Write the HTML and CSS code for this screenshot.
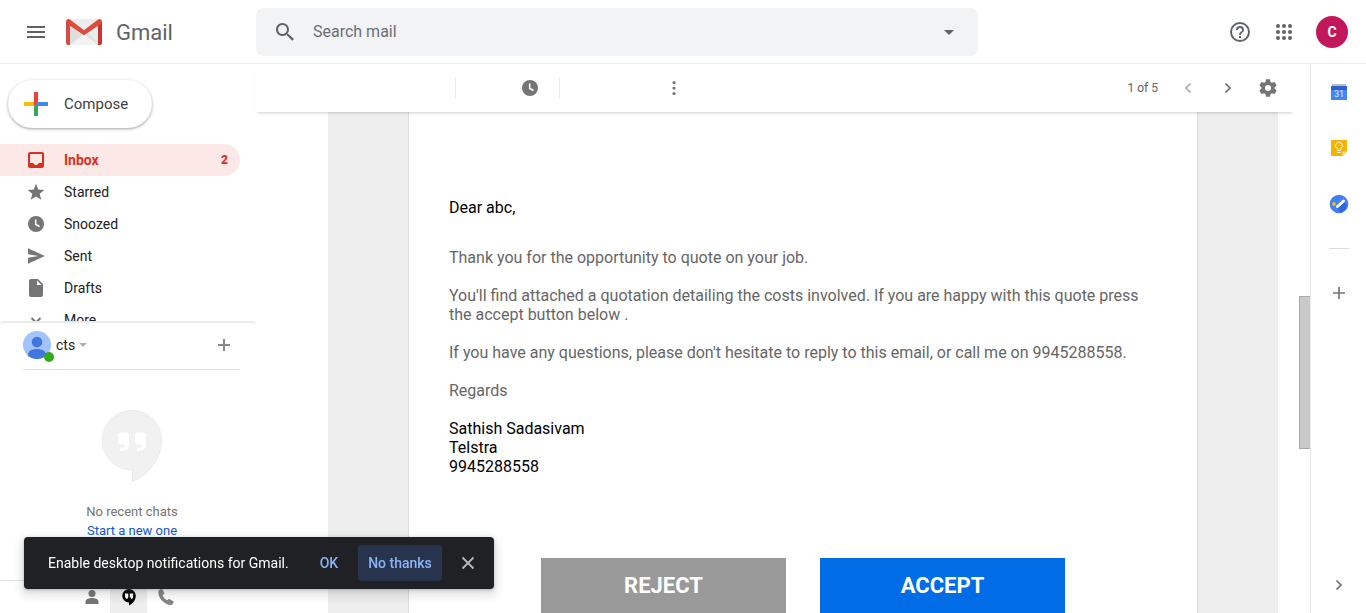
FILE: index.html
```html
<!DOCTYPE html>
<html lang="en">
<head>
<meta charset="utf-8">
<title>Gmail</title>
<link rel="stylesheet" href="styles.css">
</head>
<body>
<header class="topbar">
  <div class="brand">
    <button class="icon-btn" aria-label="Main menu">
      <svg width="24" height="24" viewBox="0 0 24 24"><path d="M3 18h18v-2H3v2zm0-5h18v-2H3v2zm0-7v2h18V6H3z" fill="#5f6368"/></svg>
    </button>
    <a class="logo" href="#" aria-label="Gmail home">
      <svg width="36" height="26" viewBox="0 0 36 26">
        <path d="M2 0h32v26H2z" fill="#ececec"/>
        <path d="M4 26 14 14l4 3 4-3 12 12z" fill="#e0e0e0"/>
        <path d="M4 26 18 15l14 11z" fill="#f2f2f2"/>
        <path d="M4 7v19l10-11z" fill="#dedede"/>
        <path d="M0 2.6V24a2 2 0 0 0 2 2h2V5z" fill="#d54b3d"/>
        <path d="M36 2.6V24a2 2 0 0 1-2 2h-2V5z" fill="#c5372c"/>
        <path d="M0 2.6C0 .2 2.400-.6 4 .6l14 10.600L32 .6c1.600-1.200 4-.4 4 2 0 1-.5 1.800-1.200 2.300L18 16.300 1.200 4.900A2.700 2.700 0 0 1 0 2.600z" fill="#dd4b3e"/>
      </svg>
      <span>Gmail</span>
    </a>
  </div>
  <form class="search">
    <button class="icon-btn" type="button" aria-label="Search">
      <svg width="24" height="24" viewBox="0 0 24 24"><path d="M15.500 14h-.8l-.3-.3a6.500 6.500 0 1 0-.7.7l.3.3v.8l5.300 5.300 1.700-1.700zm-6 0a4.500 4.500 0 1 1 0-9 4.500 4.500 0 0 1 0 9z" fill="#5f6368"/></svg>
    </button>
    <input type="text" placeholder="Search mail" aria-label="Search mail">
    <button class="icon-btn" type="button" aria-label="Search options">
      <svg width="24" height="24" viewBox="0 0 24 24"><path d="M7 10l5 5 5-5z" fill="#5f6368"/></svg>
    </button>
  </form>
  <div class="account">
    <button class="icon-btn" aria-label="Help">
      <svg width="24" height="24" viewBox="0 0 24 24"><path d="M11 18h2v-2h-2v2zm1-16a10 10 0 1 0 0 20 10 10 0 0 0 0-20zm0 18a8 8 0 1 1 0-16 8 8 0 0 1 0 16zm0-14a4 4 0 0 0-4 4h2a2 2 0 1 1 4 0c0 2-3 1.750-3 5h2c0-2.250 3-2.500 3-5a4 4 0 0 0-4-4z" fill="#5f6368"/></svg>
    </button>
    <button class="icon-btn" aria-label="Google apps">
      <svg width="24" height="24" viewBox="0 0 24 24" fill="#5f6368"><circle cx="6" cy="6" r="2"/><circle cx="12" cy="6" r="2"/><circle cx="18" cy="6" r="2"/><circle cx="6" cy="12" r="2"/><circle cx="12" cy="12" r="2"/><circle cx="18" cy="12" r="2"/><circle cx="6" cy="18" r="2"/><circle cx="12" cy="18" r="2"/><circle cx="18" cy="18" r="2"/></svg>
    </button>
    <button class="avatar">C</button>
  </div>
</header>

<div class="workspace">
  <aside class="sidebar">
    <div class="folders">
      <button class="compose">
        <svg width="24" height="24" viewBox="0 0 24 24"><path d="M10 0h4v10l-4 4z" fill="#ea4335"/><path d="M0 10h10v4H0z" fill="#fbbc04"/><path d="M10 14l4-4v14h-4z" fill="#34a853"/><path d="M14 10h10v4H10z" fill="#4285f4"/><path d="M10 14h4v10h-4z" fill="#34a853"/><path d="M10 10h4l-4 4z" fill="#ea4335"/></svg>
        <span>Compose</span>
      </button>
      <nav>
        <a class="folder active" href="#">
          <svg width="20" height="20" viewBox="0 0 20 20"><path d="M4 2h12a2 2 0 0 1 2 2v12a2 2 0 0 1-2 2H4a2 2 0 0 1-2-2V4c0-1.100.9-2 2-2zm0 2v9h3.300c.4 1.200 1.400 2 2.700 2s2.300-.8 2.700-2H16V4z" fill="#d93025" fill-rule="evenodd"/></svg>
          <span>Inbox</span><b>2</b>
        </a>
        <a class="folder" href="#">
          <svg width="20" height="20" viewBox="0 0 20 20"><path d="M10 1.700l2.300 5.800 6.100.4-4.700 3.900 1.500 6L10 14.500l-5.200 3.300 1.500-6L1.600 7.900l6.100-.4z" fill="#757575"/></svg>
          <span>Starred</span>
        </a>
        <a class="folder" href="#">
          <svg width="20" height="20" viewBox="0 0 20 20"><circle cx="10" cy="10" r="8" fill="#757575"/><path d="M9.700 5.500v5l3.800 2" fill="none" stroke="#fff" stroke-width="1.500"/></svg>
          <span>Snoozed</span>
        </a>
        <a class="folder" href="#">
          <svg width="20" height="20" viewBox="0 0 20 20"><path d="M2 2.200 18.800 10 2 17.800v-6L12.500 10 2 8.200z" fill="#757575"/></svg>
          <span>Sent</span>
        </a>
        <a class="folder" href="#">
          <svg width="20" height="20" viewBox="0 0 20 20"><path d="M5 1h7l5 5v11a2 2 0 0 1-2 2H5a2 2 0 0 1-2-2V3c0-1.100.9-2 2-2zm6 1.500V7h4.500z" fill="#757575" fill-rule="evenodd"/></svg>
          <span>Drafts</span>
        </a>
        <a class="folder" href="#">
          <svg width="20" height="20" viewBox="0 0 20 20"><path d="M5.500 8 10 12.500 14.500 8" fill="none" stroke="#757575" stroke-width="2"/></svg>
          <span>More</span>
        </a>
      </nav>
    </div>
    <section class="chat">
      <div class="chat-head">
        <div class="person">
          <svg width="28" height="28" viewBox="0 0 28 28"><defs><clipPath id="face"><circle cx="14" cy="14" r="14"/></clipPath></defs><g clip-path="url(#face)"><path d="M0 0h28v28H0z" fill="#a1c2fa"/><circle cx="14" cy="11" r="5.300" fill="#3f76e0"/><path d="M5 24c0-4 4-6 9-6s9 2 9 6v4H5z" fill="#3f76e0"/></g></svg>
          <i class="presence"></i>
        </div>
        <button class="me">cts <svg width="8" height="4" viewBox="0 0 8 4"><path d="M0 0h8L4 4z" fill="#b0b0b0"/></svg></button>
        <button class="icon-btn new-chat" aria-label="New conversation">
          <svg width="24" height="24" viewBox="0 0 24 24"><path d="M11 6h2v5h5v2h-5v5h-2v-5H6v-2h5z" fill="#8a8a8a"/></svg>
        </button>
      </div>
      <div class="chat-body">
        <svg width="60" height="72" viewBox="0 0 60 72"><path d="M30 .5a29.500 29.500 0 0 0 0 59.500h.5v11.500C48 64 59.500 48 59.500 30A29.500 29.500 0 0 0 30 .5z" fill="#f1f1f1" stroke="#ebebeb"/><path id="quote" d="M18 22.500h7a2 2 0 0 1 2 2v9.500a7 7 0 0 1-7 7h-2v-3h1.500a3.500 3.500 0 0 0 3.500-3.500h-5a2 2 0 0 1-2-2v-8a2 2 0 0 1 2-2z" fill="#fff"/><use href="#quote" x="17"/></svg>
        <p>No recent chats</p>
        <a href="#">Start a new one</a>
      </div>
      <div class="chat-tabs">
        <button aria-label="Contacts"><svg width="20" height="20" viewBox="0 0 20 20" fill="#757575"><circle cx="10" cy="6.500" r="3.500"/><path d="M3.500 17v-2.500c0-2.500 4-3.500 6.500-3.500s6.500 1 6.500 3.500V17z"/></svg></button>
        <button class="selected" aria-label="Conversations"><svg width="20" height="20" viewBox="0 0 20 20"><path d="M10 2a6.800 6.800 0 0 0 0 13.600V18.500c4-1.800 6.800-5.500 6.800-9.700A6.800 6.800 0 0 0 10 2z" fill="#000"/><path d="M6 6.500h3.300v3.300c0 1.500-.8 2.200-2.200 2.200V10.500H6zm4.800 0h3.300v3.300c0 1.500-.8 2.200-2.200 2.200V10.500h-1.100z" fill="#fff"/></svg></button>
        <button aria-label="Phone calls"><svg width="20" height="20" viewBox="0 0 20 20"><path d="M2.500 3.500 6 1.500l2.500 5-2 1.800c1 2.200 2.500 3.900 4.500 5l2-1.600 5 3-2 3.300C9 18.500 1 11 2.500 3.500z" fill="#858585"/></svg></button>
      </div>
    </section>
  </aside>

  <main class="content">
    <div class="toolbar">
      <div class="tool-group wide"></div>
      <div class="tool-group">
        <button class="icon-btn" aria-label="Snooze"><svg width="20" height="20" viewBox="0 0 20 20"><circle cx="10" cy="10" r="8" fill="#757575"/><path d="M9.700 5.500v5l3.800 2" fill="none" stroke="#fff" stroke-width="1.500"/></svg></button>
      </div>
      <div class="tool-group last">
        <button class="icon-btn" aria-label="More"><svg width="20" height="20" viewBox="0 0 20 20" fill="#757575"><circle cx="10" cy="4.500" r="1.600"/><circle cx="10" cy="10" r="1.600"/><circle cx="10" cy="15.500" r="1.600"/></svg></button>
      </div>
      <div class="pager">
        <span>1 of 5</span>
        <button class="icon-btn" aria-label="Newer"><svg width="20" height="20" viewBox="0 0 20 20"><path d="M12.500 5.500 8 10l4.500 4.500" fill="none" stroke="#aaa" stroke-width="1.700"/></svg></button>
        <button class="icon-btn" aria-label="Older"><svg width="20" height="20" viewBox="0 0 20 20"><path d="M7.500 5.500 12 10l-4.500 4.500" fill="none" stroke="#6e6e6e" stroke-width="1.700"/></svg></button>
        <button class="icon-btn" aria-label="Settings"><svg width="20" height="20" viewBox="2 2 20 20"><path d="M19.430 12.980c.04-.32.07-.64.07-.98s-.03-.66-.07-.98l2.110-1.650c.19-.15.24-.42.12-.64l-2-3.460c-.12-.22-.39-.3-.61-.22l-2.490 1c-.52-.4-1.080-.73-1.690-.98l-.38-2.650C14.460 2.180 14.250 2 14 2h-4c-.25 0-.46.18-.49.42l-.38 2.650c-.61.25-1.170.59-1.690.98l-2.490-1c-.23-.09-.49 0-.61.22l-2 3.460c-.13.22-.07.49.12.64l2.110 1.650c-.04.32-.07.65-.07.98s.03.66.07.98l-2.110 1.650c-.19.15-.24.42-.12.64l2 3.460c.12.22.39.3.61.22l2.490-1c.52.4 1.080.73 1.690.98l.38 2.650c.03.24.24.42.49.42h4c.25 0 .46-.18.49-.42l.38-2.650c.61-.25 1.170-.59 1.690-.98l2.490 1c.23.09.49 0 .61-.22l2-3.460c.12-.22.07-.49-.12-.64l-2.110-1.650zM12 15.500a3.500 3.500 0 1 1 0-7 3.500 3.500 0 0 1 0 7z" fill="#757575" transform="translate(1.500 1.500) scale(.875)"/></svg></button>
      </div>
    </div>
    <div class="viewport">
      <div class="mail">
        <article class="sheet">
          <p class="greeting">Dear abc,</p>
          <p>Thank you for the opportunity to quote on your job.</p>
          <p>You'll find attached a quotation detailing the costs involved. If you are happy with this quote press the accept button below .</p>
          <p>If you have any questions, please don't hesitate to reply to this email, or call me on 9945288558.</p>
          <p>Regards</p>
          <p class="signature">Sathish Sadasivam<br>Telstra<br>9945288558</p>
          <div class="actions">
            <a class="reject" href="#">REJECT</a>
            <a class="accept" href="#">ACCEPT</a>
          </div>
        </article>
      </div>
      <div class="scroll-track"><div class="scroll-thumb"></div></div>
    </div>
  </main>

  <aside class="addons">
    <button class="icon-btn" aria-label="Calendar"><svg width="20" height="20" viewBox="0 0 20 20"><path d="M3 2h14v3H3z" fill="#bdbdbd"/><path d="M2 4h16v14H2z" fill="#4285f4"/><path d="M2 4h16v4H2z" fill="#2f5fd0"/><text class="cal-day" x="10" y="15" text-anchor="middle" fill="#e3edfd">31</text></svg></button>
    <button class="icon-btn" aria-label="Keep"><svg width="20" height="20" viewBox="0 0 20 20"><path d="M3 2h14a1 1 0 0 1 1 1v10.500L13.500 18H3a1 1 0 0 1-1-1V3a1 1 0 0 1 1-1z" fill="#f5b400"/><path d="M18 13.500h-4.500V18z" fill="#fbdc84"/><path d="M8.500 12.500v-1.700a3.400 3.400 0 1 1 3 0v1.700zM8.500 14.500h3" fill="none" stroke="#fff" stroke-width="1"/></svg></button>
    <button class="icon-btn" aria-label="Tasks"><svg width="20" height="20" viewBox="0 0 20 20"><circle cx="10" cy="10" r="9.300" fill="#4281f3"/><path d="M9 14l6-6 3 3c-1 4-4 7-7 7.500z" fill="#3367d6"/><path d="M8.500 12.500 14.500 7" stroke="#fff" stroke-width="3" stroke-linecap="round"/><circle cx="5" cy="10" r="1.900" fill="#fbbc04"/></svg></button>
    <hr>
    <button class="icon-btn" aria-label="Get add-ons"><svg width="20" height="20" viewBox="0 0 20 20"><path d="M10 4v12M4 10h12" stroke="#757575" stroke-width="1.700"/></svg></button>
    <button class="icon-btn collapse" aria-label="Hide side panel"><svg width="20" height="20" viewBox="0 0 20 20"><path d="M7.500 5.500 12 10l-4.500 4.500" fill="none" stroke="#6e6e6e" stroke-width="1.700"/></svg></button>
  </aside>
</div>

<div class="toast" role="status">
  <span>Enable desktop notifications for Gmail.</span>
  <button class="toast-btn">OK</button>
  <button class="toast-btn focus">No thanks</button>
  <button class="icon-btn toast-close" aria-label="Close"><svg width="20" height="20" viewBox="0 0 20 20"><path d="M4.500 4.500l11 11M15.500 4.500l-11 11" stroke="#b8b9ba" stroke-width="1.800"/></svg></button>
</div>
</body>
</html>
```
FILE: styles.css
```css
* { box-sizing: border-box; }
body {
  margin: 0;
  height: 100vh;
  display: flex;
  flex-direction: column;
  overflow: hidden;
  background: #fff;
  color: #202124;
  font: 14px/20px Roboto, "Liberation Sans", sans-serif;
}
button { border: 0; padding: 0; background: none; font: inherit; color: inherit; }
a { text-decoration: none; color: inherit; }
p { margin: 0; }
svg { display: block; flex: none; }
.icon-btn { display: grid; place-items: center; flex: none; }

/* Header */
.topbar {
  flex: none;
  display: flex;
  align-items: center;
  height: 64px;
  padding-right: 18px;
  border-bottom: 1px solid #ececec;
}
.brand { width: 256px; flex: none; display: flex; align-items: center; padding-left: 24px; gap: 18px; }
.logo { display: flex; align-items: center; gap: 14px; font: 22px/28px Roboto, sans-serif; color: #5f6368; }
.logo span { padding-top: 2px; }
.search {
  flex: 0 1 722px;
  height: 48px;
  display: flex;
  align-items: center;
  padding: 0 17px;
  gap: 16px;
  background: #f1f3f4;
  border-radius: 8px;
}
.search input {
  flex: 1;
  min-width: 0;
  border: 0;
  padding: 0;
  background: none;
  font: 16px/24px Roboto, sans-serif;
  color: #5f6368;
}
.search input::placeholder { color: #6b6f73; opacity: 1; }
.account { margin-left: auto; display: flex; align-items: center; gap: 20px; }
.avatar { width: 32px; height: 32px; border-radius: 50%; background: #c2185b; color: #fff; font-size: 14px; font-weight: 700; }

.workspace { flex: 1; min-height: 0; display: flex; }

/* Sidebar */
.sidebar { width: 256px; flex: none; display: flex; flex-direction: column; min-height: 0; }
.folders { flex: 0 1 257px; min-height: 0; overflow: hidden; padding-top: 16px; }
.compose {
  display: flex;
  align-items: center;
  gap: 16px;
  height: 48px;
  margin: 0 0 16px 8px;
  padding: 0 24px 0 16px;
  border-radius: 24px;
  font-size: 15px;
  color: #3c4043;
  box-shadow: 0 1px 2px rgba(60, 64, 67, .3), 0 1px 3px 1px rgba(60, 64, 67, .15);
}
.folder {
  display: flex;
  align-items: center;
  gap: 18px;
  height: 32px;
  margin-right: 16px;
  padding: 0 12px 0 26px;
  border-radius: 0 16px 16px 0;
}
.folder.active { background: #fce8e6; color: #d93025; font-weight: 700; }
.folder b { margin-left: auto; font-size: 12px; }

.chat { flex: 1 0 auto; display: flex; flex-direction: column; border-top: 2px solid #ebebeb; border-radius: 4px; background: #fff; }
.chat-head { display: flex; align-items: center; height: 47px; margin: 0 16px 0 23px; padding-bottom: 2px; border-bottom: 1px solid #e2e2e2; }
.person { position: relative; }
.presence { position: absolute; right: -3px; bottom: -3px; width: 10px; height: 10px; border-radius: 50%; background: #34a91c; }
.me { display: flex; align-items: center; gap: 4px; margin-left: 5px; }
.new-chat { margin-left: auto; margin-right: 4px; }
.chat-body { flex: 1; display: flex; flex-direction: column; align-items: center; padding: 40px 0 0 8px; line-height: 19px; font-size: 13px; color: #757575; }
.chat-body p { margin-top: 20px; }
.chat-body a { color: #1155cc; }
.chat-tabs { flex: none; display: flex; height: 33px; padding-left: 73px; border-top: 1px solid #e2e2e2; }
.chat-tabs button { width: 37px; display: grid; place-items: center; }
.chat-tabs .selected { background: #eee; }

/* Message area */
.content { flex: 1; min-width: 0; display: flex; flex-direction: column; }
.toolbar {
  position: relative;
  flex: none;
  height: 48px;
  margin-right: 16px;
  display: flex;
  align-items: center;
  box-shadow: 0 3px 3px -2px rgba(0, 0, 0, .2);
}
.tool-group { width: 104px; height: 20px; display: flex; justify-content: flex-end; padding-right: 19px; border-right: 1px solid #e8e8e8; }
.tool-group.wide { width: 200px; }
.tool-group.last { width: 124px; padding-right: 0; border: 0; }
.pager { margin-left: auto; padding-right: 16px; display: flex; align-items: center; gap: 20px; font-size: 12px; color: #5f6368; }
.viewport { flex: 1; min-height: 0; display: flex; }
.mail { flex: 1; min-width: 0; margin: 0 16px 0 72px; padding: 0 80px; background: #eee; overflow: hidden; }
.sheet {
  padding: 86px 40px 0;
  min-height: 100%;
  background: #fff;
  border: solid #ddd;
  border-width: 0 1px;
  font: 16px/19px Roboto, sans-serif;
  color: #666;
}
.sheet p { margin-bottom: 19px; }
.sheet .greeting { margin-bottom: 31px; color: #000; }
.sheet .signature { color: #000; }
.actions { display: flex; justify-content: center; gap: 34px; margin-top: 82px; }
.actions a { width: 245px; line-height: 55px; text-align: center; font-size: 22px; font-weight: 700; color: #fff; }
.reject { background: #999; }
.accept { background: #006ce6; }
.scroll-track { width: 16px; flex: none; display: flex; flex-direction: column; align-items: flex-end; padding-top: 184px; }
.scroll-thumb { width: 11px; height: 153px; background: #c9c9c9; border: solid #aaa; border-width: 1px 0 1px 1px; }

/* Add-on rail */
.addons { width: 56px; flex: none; display: flex; flex-direction: column; align-items: center; gap: 36px; padding: 18px 0; border-left: 1px solid #ececec; }
.addons hr { width: 20px; margin: -2px 0 -2px; border: 0; border-top: 1px solid #ddd; }
.addons .collapse { margin-top: auto; }
.cal-day { font: 9px Roboto, sans-serif; }

/* Notification prompt */
.toast {
  position: fixed;
  left: 24px;
  bottom: 24px;
  display: flex;
  align-items: center;
  height: 52px;
  padding: 0 16px 0 24px;
  border-radius: 4px;
  background: #202124;
  color: #fff;
  box-shadow: 0 1px 3px rgba(60, 64, 67, .3), 0 4px 8px 3px rgba(60, 64, 67, .15);
}
.toast-btn { height: 36px; padding: 0 8px; border-radius: 4px; color: #8ab4f8; font-weight: 500; }
.toast span { margin-right: 23px; }
.toast .focus { margin: 0 16px 0 12px; padding: 0 10px; background: #28344d; }
```
